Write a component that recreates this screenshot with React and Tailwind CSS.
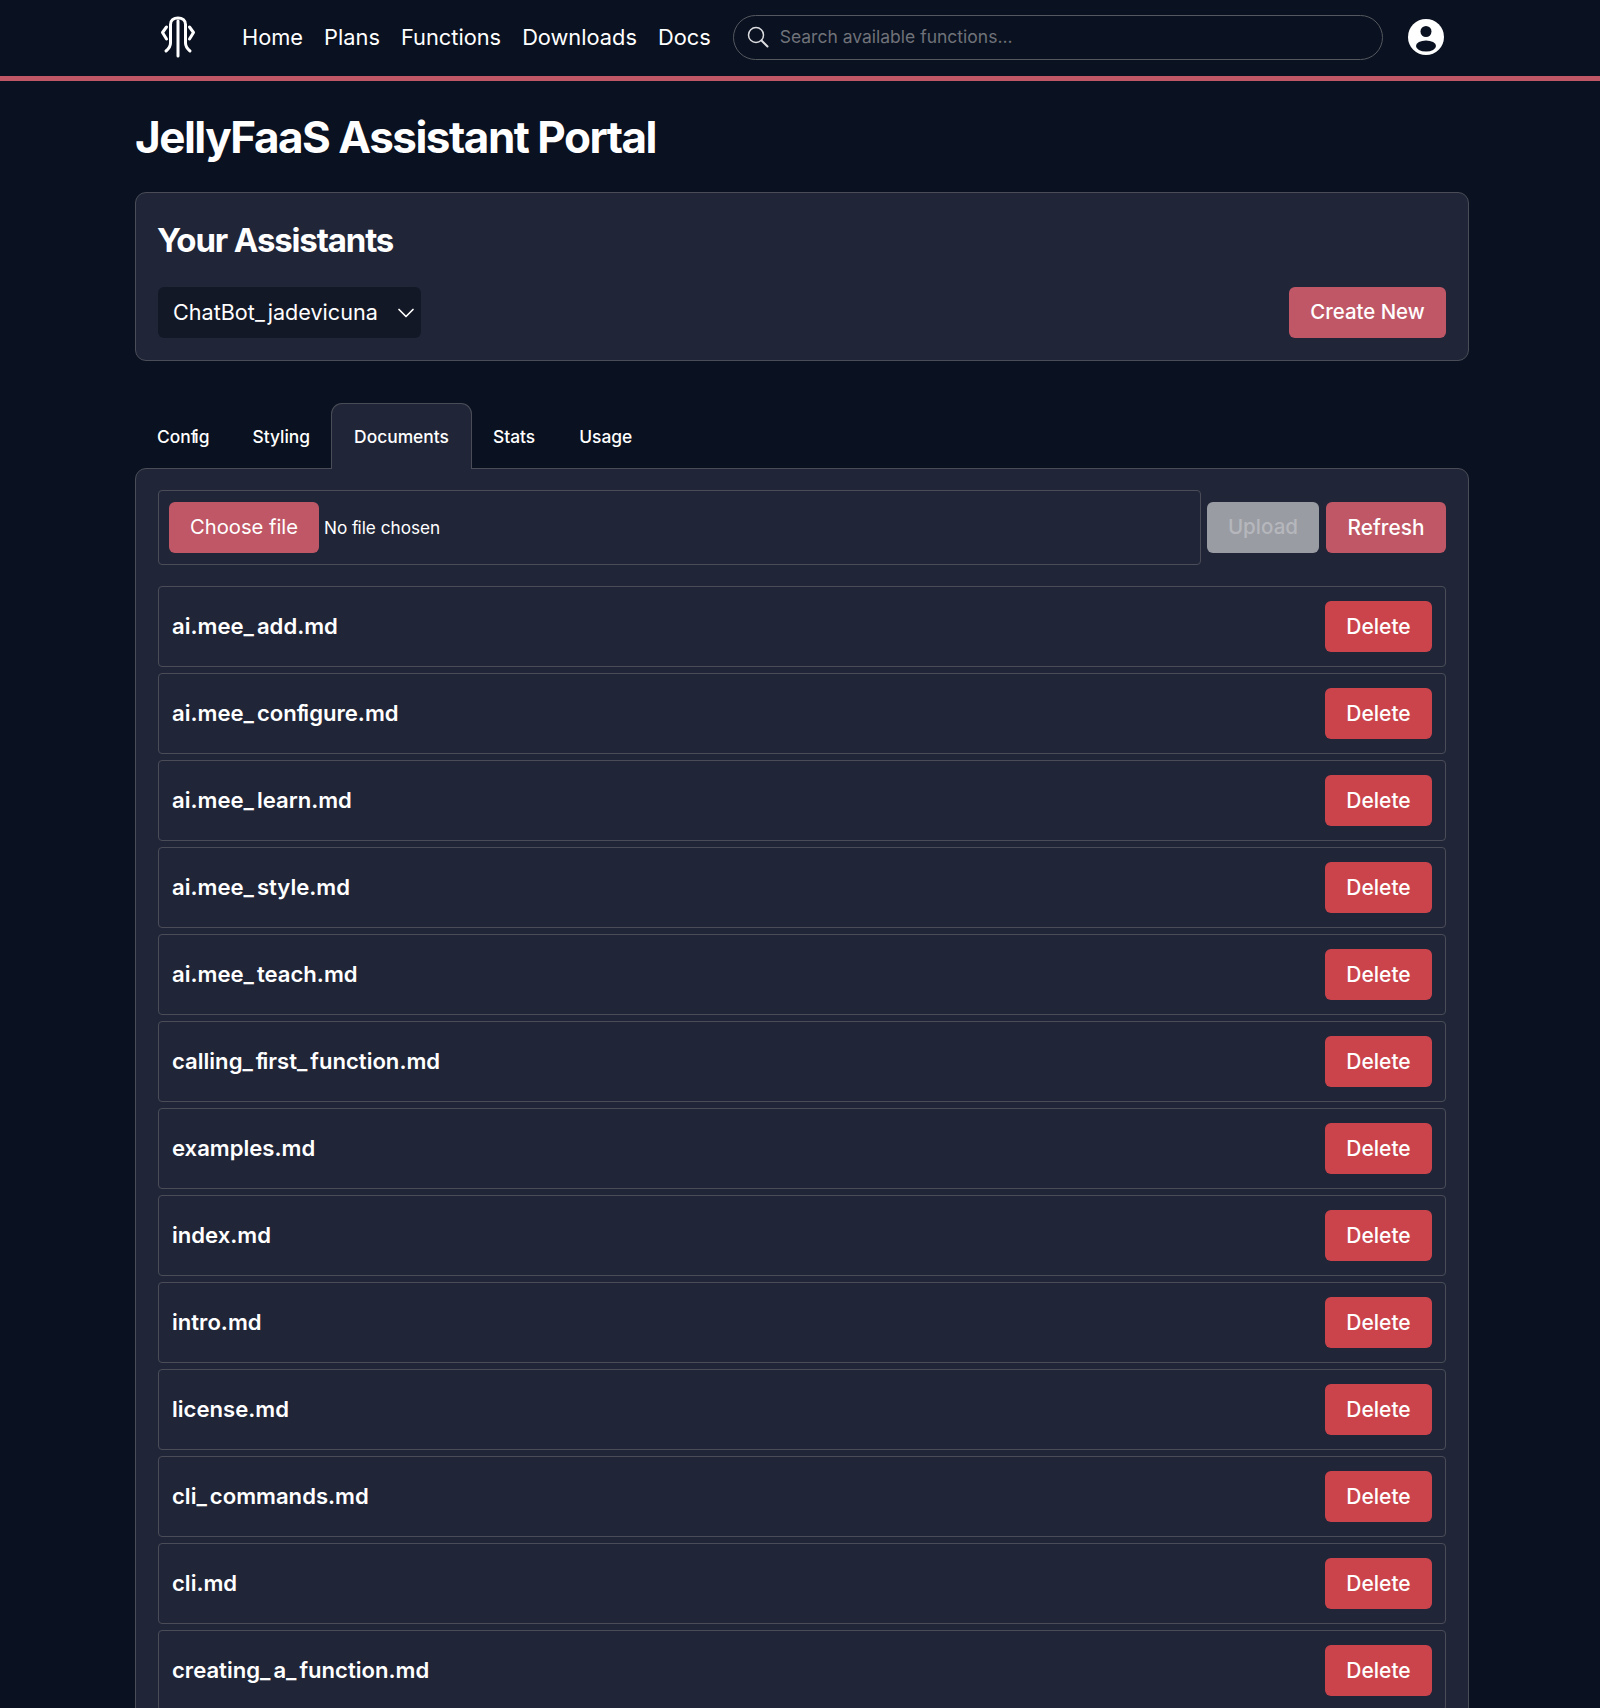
const files = ["ai.mee_add.md","ai.mee_configure.md","ai.mee_learn.md","ai.mee_style.md","ai.mee_teach.md","calling_first_function.md","examples.md","index.md","intro.md","license.md","cli_commands.md","cli.md","creating_a_function.md"];

function Styled({ text }) {
  const parts = text.split(/(_|fi)/);
  return (
    <>
      {parts.map((p, i) =>
        p === "_" ? (
          <span key={i} className="tracking-[3px]">_</span>
        ) : p === "fi" ? (
          <span key={i}><span className="tracking-[-2px]">f</span>i</span>
        ) : (
          <span key={i}>{p}</span>
        )
      )}
    </>
  );
}

function Logo() {
  return (
    <svg width="36" height="44" viewBox="0 0 36 44" fill="none" stroke="white" strokeWidth="3" strokeLinecap="round" strokeLinejoin="round">
      <path d="M18 6V41" />
      <path d="M6.5 12L2.5 17.5L6.5 24" />
      <path d="M29.5 12L33.5 17.5L29.5 24" />
      <path d="M6 36C9 33.5 10.5 32 10.5 28V9.5C10.5 5.5 13.5 3 18 3C22.5 3 25.5 5.5 25.5 9.5V28C25.5 32 27 33.5 30 36" />
    </svg>
  );
}

export default function App() {
  return (
    <div className="h-[1708px] overflow-hidden bg-[#0a1120] text-white font-['Inter',sans-serif]">
      <header className="h-[81px] border-b-[5px] border-[#c05766] pl-[160px] pb-[2px] flex items-center">
        <Logo />
        <nav className="flex items-center gap-[21px] text-[21.8px] ml-[46px] font-normal">
          <span>Home</span>
          <span>Plans</span>
          <span>Functions</span>
          <span>Downloads</span>
          <span>Docs</span>
        </nav>
        <div className="ml-[22px] w-[650px] h-[45px] rounded-full border border-[#55585f] flex items-center pl-[13px]">
          <svg width="22" height="22" viewBox="0 0 22 22" fill="none" stroke="#dcdde0" strokeWidth="1.5" strokeLinecap="round">
            <circle cx="9" cy="9" r="7.5" />
            <path d="M14.5 14.5L20.5 20.5" strokeWidth="2" />
          </svg>
          <span className="ml-[11px] pt-[1px] text-[17.5px] text-[#6f7279]">Search available functions...</span>
        </div>
        <svg className="ml-[25px]" width="36" height="36" viewBox="0 0 36 36">
          <circle cx="18" cy="18" r="18" fill="white" />
          <circle cx="18" cy="12.5" r="5.5" fill="#0a1120" />
          <ellipse cx="18" cy="27" rx="10" ry="5.5" fill="#0a1120" />
        </svg>
      </header>

      <main className="ml-[135px] w-[1334px]">
        <h1 className="mt-[29px] h-[55px] text-[44px] leading-[55px] font-bold tracking-[-0.034em]">JellyFaaS Assistant Portal</h1>

        <section className="mt-[27px] h-[169px] bg-[#202538] border border-[#4a4d57] rounded-[11px] px-[22px] pt-[26px]">
          <h2 className="h-[42px] -ml-px text-[33px] leading-[42px] font-bold tracking-[-0.035em]">Your Assistants</h2>
          <div className="mt-[26px] flex items-center justify-between">
            <div className="w-[263px] h-[51px] bg-[#131827] rounded-[6px] flex items-center justify-between pl-[15px] pr-[3px]">
              <span className="text-[21.6px]"><Styled text="ChatBot_jadevicuna" /></span>
              <svg width="24" height="24" viewBox="0 0 24 24" fill="none" stroke="white" strokeWidth="1.7" strokeLinecap="round" strokeLinejoin="round">
                <path d="M5 8.5L12 15.5L19 8.5" />
              </svg>
            </div>
            <button className="w-[157px] h-[51px] bg-[#c05766] rounded-[6px] text-[20.4px] font-medium">Create New</button>
          </div>
        </section>

        <div className="mt-[42px] h-[66px] flex relative z-10 text-[17.4px] font-medium pt-[2px]">
          <div className="px-[22px] flex items-center h-[64px]"><span>Con<span className="tracking-[-3px]">f</span>ig</span></div>
          <div className="px-[21px] flex items-center h-[64px]">Styling</div>
          <div className="px-[22px] flex items-center h-[66px] -mt-[2px] pt-[2px] bg-[#202538] border border-b-0 border-[#4a4d57] rounded-t-[11px]">Documents</div>
          <div className="pl-[21px] pr-[23px] flex items-center h-[64px]">Stats</div>
          <div className="px-[21px] flex items-center h-[64px]">Usage</div>
        </div>

        <section className="-mt-px bg-[#202538] border border-[#4a4d57] rounded-[11px] px-[22px] pt-[21px] pb-[22px]">
          <div className="flex items-center gap-[6px]">
            <div className="w-[1043px] h-[75px] border border-[#4a4d57] rounded-[4px] flex items-center pl-[10px]">
              <button className="w-[150px] h-[51px] bg-[#c05766] rounded-[6px] text-[20.2px]">Choose file</button>
              <span className="ml-[5px] text-[17.2px]">No <span className="tracking-[-1px]">f</span>ile chosen</span>
            </div>
            <button className="w-[112px] h-[51px] bg-[#9a9ca3] rounded-[6px] text-[20.6px] font-medium text-[#b5b7bc]">Upload</button>
            <button className="ml-px w-[120px] h-[51px] bg-[#c05766] rounded-[6px] text-[20.8px] font-medium">Refresh</button>
          </div>
          <div className="mt-[21px] flex flex-col gap-[6px]">
            {files.map((f) => (
              <div key={f} className="h-[81px] border border-[#4a4d57] rounded-[4px] flex items-center justify-between pl-[13px] pr-[13px]">
                <span className="text-[22.1px] font-semibold"><Styled text={f} /></span>
                <button className="w-[107px] h-[51px] bg-[#cb444c] rounded-[6px] text-[21px] font-medium">Delete</button>
              </div>
            ))}
          </div>
        </section>
      </main>
    </div>
  );
}
